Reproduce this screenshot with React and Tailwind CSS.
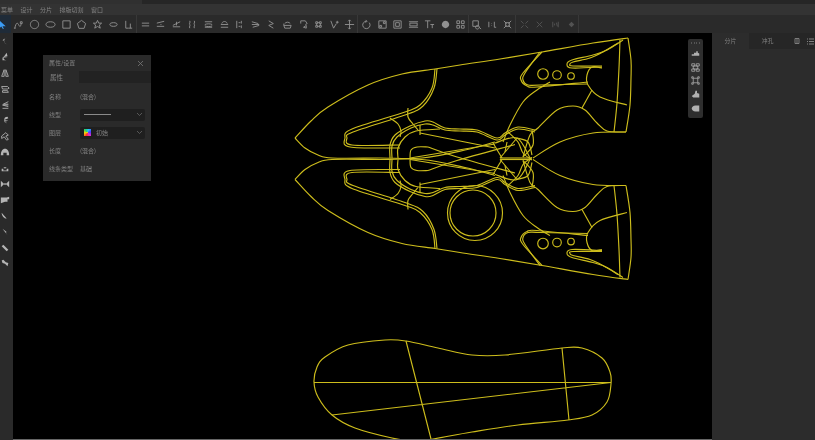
const spline = (p, closed = false) => {
  const n = p.length;
  const at = (i) => (closed ? p[(i + n) % n] : p[Math.max(0, Math.min(n - 1, i))]);
  let d = `M${p[0][0]} ${p[0][1]}`;
  for (let i = 0; i < (closed ? n : n - 1); i++) {
    const a = at(i - 1), b = at(i), c = at(i + 1), e = at(i + 2);
    d += `C${(b[0] + (c[0] - a[0]) / 6).toFixed(1)} ${(b[1] + (c[1] - a[1]) / 6).toFixed(1)} ${(c[0] - (e[0] - b[0]) / 6).toFixed(1)} ${(c[1] - (e[1] - b[1]) / 6).toFixed(1)} ${c[0]} ${c[1]}`;
  }
  return d + (closed ? "Z" : "");
};

const half = [
  [[295,138],[311,121],[328,107],[368,85],[402,74],[435,69],[460,65],[500,59],[542,52],[593,43],[628,38]],
  [[628,38],[631,60],[631,78],[630,105],[626,132]],
  [[620,40],[619,68],[617,103],[614,132]],
  [[626,132],[593,133],[560,142],[533,158]],
  [[295,138],[305,148],[318,155],[332,158],[380,158],[422,158],[465,150],[495,142]],
  [[435,69],[432,88],[420,105],[405,112],[352,129],[345,138],[350,147],[400,148]],
  [[437,69],[434,88],[423,106],[405,115],[353,132],[347,138],[352,145],[400,145]],
  [[390,118],[398,124],[401,131],[400,137]],
  [[408,108],[408,117],[413,124],[418,130]],
  [[390,158],[390,145],[395,135],[410,126],[425,121],[433,122],[445,128],[460,129],[477,130],[497,138],[505,133],[518,127],[535,130]],
  [[392,158],[392,146],[397,137],[411,128],[425,124],[433,125],[445,130],[460,131],[477,132],[497,140],[505,135],[518,129],[535,132]],
  [[398,158],[398,148],[405,137],[416,131],[440,129]],
  [[420,125],[420,135]],
  [[420,133],[465,142],[495,148]],
  [[410,158],[411,150],[417,147],[428,147]],
  [[410,158],[495,144]],
  [[428,147],[457,157],[515,173]],
  [[495,143],[517,138],[530,158]],
  [[493,143],[502,158]],
  [[500,158],[517,138]],
  [[507,142],[505,152]],
  [[500,158],[532,158]],
  [[517,138],[528,142],[532,155]],
  [[503,142],[510,125],[523,102],[537,90],[550,82]],
  [[532,130],[533,145],[523,157]],
  [[508,132],[518,142],[523,153],[532,160]],
  [[523,157],[530,135],[538,128],[557,110],[573,106],[585,110],[597,123],[607,131],[626,132]],
  [[582,108],[592,90]],
  [[602,68],[592,67],[587,75],[588,85],[600,97],[627,105]],
  [[623,40],[607,50],[593,55],[572,60],[567,64],[572,68],[602,67]],
  [[618,43],[603,52],[590,58],[573,62],[570,64],[573,66],[602,66]],
  [[542,52],[523,73],[521,80],[527,86],[537,87],[588,82]],
  [[540,52],[525,73],[523,80],[528,85],[540,85],[588,84]],
];

const sole = [[314,382],[317,367],[325,357],[348,345],[385,340],[406,341],[438,348],[472,355],[505,355],[562,348],[582,348],[602,358],[610,372],[611,384],[607,402],[592,415],[568,420],[518,425],[472,432],[433,439],[415,441],[392,438],[355,428],[332,415],[318,397]];

const top = [
  ["M2 1v9.500l2.600-2.200L6.500 11l1-.5L6 8h3.500z", true],
  ["M2 10c1-5 2.500-7 4-4s2 3 3-1M1 10h2M8 3h2v2h-2z"],
  ["M6 1.500a4.500 4.500 0 1 0 .01 0z"],
  ["M6 3c3 0 5 1.300 5 3s-2 3-5 3-5-1.300-5-3 2-3 5-3z"],
  ["M2 2h8v8H2z"],
  ["M6 1.500l4.500 3.400-1.700 5.300H3.200L1.500 4.900z"],
  ["M6 1.500l1.300 3h3.200L8 6.600l1 3.400-3-1.900L3 10l1-3.400L1.500 4.500h3.200z"],
  ["M6 4c2.500 0 4 .8 4 2s-1.500 2-4 2-4-.8-4-2 1.500-2 4-2z"],
  ["M3 2v8h3M8 5v5M6 10h4"],
  ["M2 4.500h8M2 7.500h8"],
  ["M2 4.500l8-2M2 8h8M6 6h1"],
  ["M2 7l8-4M2 8.500h8M6 3v4"],
  ["M3 2c1 2-1 3 0 4s-1 2 0 4M8 2c1 2-1 3 0 4s-1 2 0 4"],
  ["M2 3h8M2 6c2-1 6-1 8 0M2 9h8M2 7.500c2 1 6 1 8 0"],
  ["M2 9h8M3 5c1-3 5-3 6 0M2 6h8"],
  ["M3 2v8M8 2v3M8 7v3M5 4h2M5 8h2"],
  ["M2 3l7 2M2 6h8M3 9l7-2"],
  ["M3 2l5 3-5 2 5 3"],
  ["M2 7h8l-1 3H3zM3 5c1-2 5-2 6 0M2 7V5"],
  ["M3 2h5l2 3-2 1M3 2v3M6 9l3-2v3z"],
  ["M3 3h2v2H3zM7 3h2v2H7zM3 7h2v2H3zM7 7h2v2H7zM5 4h2M5 8h2M4 5v2M8 5v2"],
  ["M2 2l3 8 3-5M9 2v3M7.500 3.500h3"],
  ["M6 1v10M1 6h10M4.500 2.500L6 1l1.500 1.500M4.500 9.500L6 11l1.500-1.500"],
  ["M9 4a4 4 0 1 1-3-1.500M5 1l1.500 1.500L5 4"],
  ["M2 2h8v8H2zM7 3h2v2H7zM3 7h2v2H3z"],
  ["M2 2h8v8H2zM4 4h4v4H4z"],
  ["M1 3h10M1 9h10M2 4.500h8v3H2z"],
  ["M1 2h6M4 2v8M7 6h4M9 6v4"],
  ["M6 2a4 4 0 1 0 .01 0z", true],
  ["M2 2h3v3H2zM7 2h3v3H7zM2 7h3v3H2zM7 7h3v3H7z"],
  ["M2 2h6v6H2zM7 7a2 2 0 1 0 .01 0zM9 9l2 2"],
  ["M2 3v6M5 5v.5M5 7v.5M8 3v6h2"],
  ["M2 2l3 3M10 2L7 5M2 10l3-3M10 10L7 7M4 4h4v4H4z"],
  ["M2 2l3 3M10 2L7 5M2 10l3-3M10 10L7 7", false, true],
  ["M3 3l6 6M9 3L3 9", false, true],
  ["M3 3v6M9 3v6M5 5v2M7 4l1 4", false, true],
  ["M6 3l3 3-3 3-3-3z", true, true],
];
const breaks = new Set([8, 22, 29, 32, 36]);

const left = [
  "M9 2a4 4 0 1 0 0 8C5 9 4 7 6 6L3 5c2-2 4-3 6-3z",
  "M8 1l1 4H5l4 1-5 1c1 3 3 3 6 3H3V7l2-2z",
  "M5 2L2 10h3zM7 2l3 8H7z",
  "M2 3h7l2 2-2 1H3zM3 8h6l1 2H3z",
  "M10 2L4 5h6M10 6H3l7 2M3 10h7",
  "M9 2a4 4 0 1 0 0 8L5 8l5-1-5-1 5-2z",
  "M2 6l5-4 3 3-3 1 3 4-2 1-3-4-3 2z",
  "M1 10c0-5 2-8 5-8s5 3 5 8H8V7H4v3z",
  "M6 1v6M4 5l2 2 2-2M2 7h2v2h4V7h2v3H2z",
  "M1 2l4 4-4 4zM11 2L7 6l4 4zM5 5h2v2H5z",
  "M1 3h7l3-1v3H9v3H6L1 10z",
  "M2 2c0 4 3 7 6 7M8 9h3M2 1v2",
  "M3 2l5 4-1 1 2 3M3 6l3 1",
  "M2 4l2-2 6 6-2 2z",
  "M2 3l2-1 3 3 3 1-1 4-3-3-3-1z",
];
const floats = [
  "M1 9h10V6l-2-1V3H7v2H4v2H1z",
  "M1 1h4v3H1zM7 1h4v3H7zM1 8h4v3H1zM7 8h4v3H7zM3 4h6v4H3z",
  "M1 1h2v2H1zM9 1h2v2H9zM1 9h2v2H1zM9 9h2v2H9zM3 3h6v6H3z",
  "M1 8l4-3 1-4h2v3l3 1v5H3z",
  "M1 6c0-2 2-4 5-4h5v8H6C3 10 1 8 1 6z",
];

const Glyph = ({ d, fill, dim, size = 11 }) => (
  <svg width={size} height={size} viewBox="0 0 12 12" fill={fill ? "currentColor" : "none"} stroke={fill ? "none" : "currentColor"} strokeWidth="1" className={dim ? "opacity-40" : ""}>
    <path d={d} />
  </svg>
);

const Row = ({ label, children }) => (
  <div className="flex items-center h-[18px] pl-[6px]">
    <span className="w-[31px] shrink-0 whitespace-nowrap text-[#808080]">{label}</span>
    {children}
  </div>
);

const Chevron = () => (
  <svg width="7" height="5" viewBox="0 0 7 5" fill="none" stroke="#666" strokeWidth="0.8" className="ml-auto mr-[2px]">
    <path d="M1 1l2.500 2.500L6 1" />
  </svg>
);

export default function App() {
  return (
    <div className="w-[815px] h-[440px] overflow-hidden flex flex-col bg-[#2a2a2a] text-[6px] text-[#858585] blur-[0.5px] font-['Noto_Sans_CJK_SC','Noto_Sans',sans-serif] leading-none">
      <div className="h-[4px] flex bg-[#262626]">
        <div className="w-[142px] bg-[#303030]" />
      </div>
      <div className="h-[11px] bg-[#333333] flex items-center gap-[7.500px] pl-[1px] text-[#858585]">
        <span>菜单</span><span>设计</span><span>分片</span><span>排版切割</span><span>窗口</span>
      </div>
      <div className="h-[18px] bg-[#2a2a2a] flex items-center overflow-hidden">
        {top.map(([d, fill, dim], i) => (
          <div key={i} className={`w-[15.800px] h-full items-center shrink-0 flex justify-center ${i === 0 ? "ml-[-5px] text-[#3b9cf5] bg-[#1f2b38]" : "text-[#909090]"} ${breaks.has(i) ? "border-r border-[#383838]" : ""}`}>
            <Glyph d={d} fill={fill} dim={dim} />
          </div>
        ))}
      </div>
      <div className="flex-1 flex min-h-0">
        <div className="w-[13px] shrink-0 bg-[#2a2a2a] flex flex-col pt-[3px] gap-[5.900px] overflow-hidden text-[#b4b4b4]">
          {left.map((d, i) => (
            <div key={i} className="h-[10px] flex">
              <Glyph d={d} fill={i < 2 || i === 5 || i > 6} size={10} />
            </div>
          ))}
        </div>
        <div className="flex-1 relative bg-black border-b border-[#666]">
          <svg className="block w-full h-full" viewBox="13 33 699 406" fill="none" stroke="#cdbd1c" strokeWidth="1.150">
            <g>
              {half.map((p, i) => <path key={i} d={spline(p)} />)}
              <circle cx="543" cy="74" r="5.300" />
              <circle cx="557" cy="75" r="4.300" />
              <circle cx="571" cy="76" r="3.300" />
            </g>
            <g transform="translate(0 317.500) scale(1 -1)">
              {half.map((p, i) => <path key={i} d={spline(p)} />)}
              <circle cx="543" cy="74" r="5.300" />
              <circle cx="557" cy="75" r="4.300" />
              <circle cx="571" cy="76" r="3.300" />
            </g>
            <circle cx="475" cy="213" r="27.500" />
            <circle cx="473" cy="213" r="23" />
            <path d={spline(sole, true)} />
            <path d="M314 382.500H611M332 415L611 382.500M406 341L431 439M562 348L569 420" />
          </svg>

          <div className="absolute left-[30px] top-[22px] w-[108px] h-[126px] bg-[#2a2a2a] flex flex-col">
            <div className="h-[16px] flex items-center justify-between pl-[6px] pr-[7px]">
              <span>属性/设置</span>
              <svg width="7" height="7" viewBox="0 0 7 7" stroke="#777" strokeWidth="0.8"><path d="M1 1l5 5M6 1L1 6" /></svg>
            </div>
            <div className="h-[12px] flex bg-[#222222]">
              <div className="w-[36px] bg-[#2a2a2a] flex items-center pl-[7px] text-[6.500px]">属性</div>
            </div>
            <div className="flex flex-col pt-[4.500px]">
              <Row label="名称"><span>(混合)</span></Row>
              <Row label="线型">
                <div className="w-[65px] h-[12px] rounded-[2px] bg-[#1f1f1f] flex items-center pl-[4px]">
                  <div className="w-[27px] h-px bg-[#8a8a8a]" />
                  <Chevron />
                </div>
              </Row>
              <Row label="图层">
                <div className="w-[65px] h-[12px] rounded-[2px] bg-[#1f1f1f] flex items-center pl-[4px] gap-[5px]">
                  <div className="w-[7px] h-[7px] bg-[conic-gradient(from_200deg,#ff2b2b,#ffd400,#22d36a,#21c4ff,#4a3cff,#e02cd0,#ff2b2b)]" />
                  <span>初始</span>
                  <Chevron />
                </div>
              </Row>
              <Row label="长度"><span>(混合)</span></Row>
              <Row label="线条类型"><span>基础</span></Row>
            </div>
          </div>

          <div className="absolute left-[675px] top-[6px] w-[15px] h-[79px] rounded-[2px] bg-[#2e2e2e] flex flex-col items-center pt-[1px] text-[#b0b0b0]">
            <div className="h-[5px] w-[9px] flex justify-between items-center">
              {[0, 1, 2, 3].map((i) => <span key={i} className="w-px h-[2px] bg-[#555]" />)}
            </div>
            <div className="flex flex-col gap-[4.700px] mt-[4px]">
              {floats.map((d, i) => <Glyph key={i} d={d} fill={i !== 1 && i !== 2} size={9} />)}
            </div>
          </div>
        </div>
        <div className="w-[103px] shrink-0 bg-[#2c2c2c] flex flex-col">
          <div className="h-[16px] flex bg-[#262626] items-center text-[#808080]">
            <div className="w-[37px] h-full bg-[#2c2c2c] flex items-center justify-center">分片</div>
            <div className="w-[37px] flex justify-center">冲孔</div>
            <div className="ml-[8px] text-[#8f8f8f]">
              <svg width="6" height="6" viewBox="0 0 6 6" fill="none" stroke="currentColor" strokeWidth="0.8"><path d="M1 .5h4v5H1zM3 .5v5" /></svg>
            </div>
            <div className="ml-[7px] text-[#9a9a9a]">
              <svg width="7" height="7" viewBox="0 0 7 7" fill="none" stroke="currentColor" strokeWidth="0.8"><path d="M0 1h1M2 1h5M0 3.500h1M2 3.500h5M0 6h1M2 6h5" /></svg>
            </div>
          </div>
        </div>
      </div>
    </div>
  );
}
